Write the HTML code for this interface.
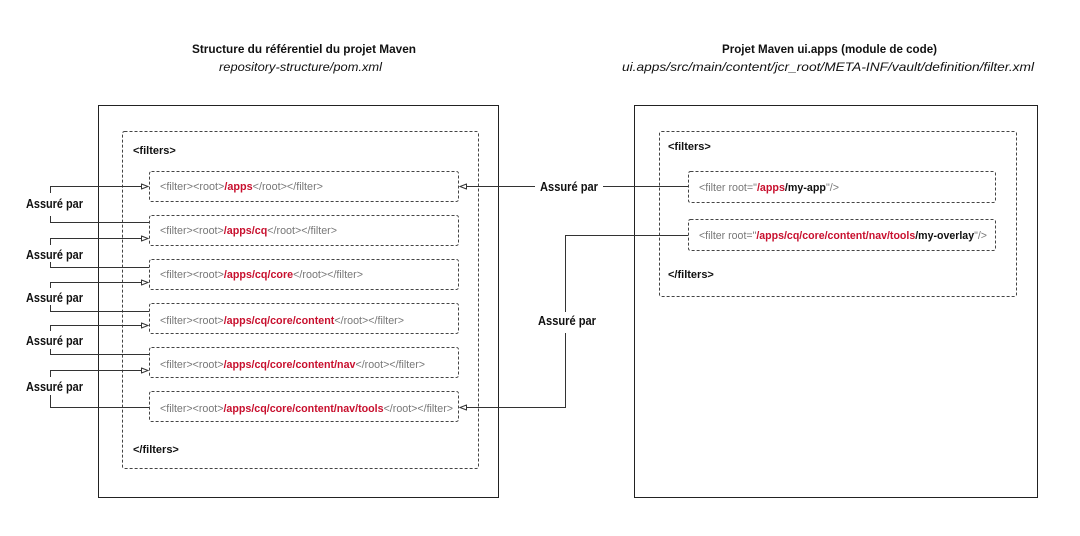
<!DOCTYPE html>
<html><head><meta charset="utf-8"><style>
html,body{margin:0;padding:0;background:#fff;width:1080px;height:536px;overflow:hidden}
svg{display:block}
text{font-family:"Liberation Sans Narrow","Liberation Sans",sans-serif}
.t{font-size:12px;font-weight:bold;fill:#111}
.ti{font-size:12px;font-style:italic;fill:#111}
.f{font-size:11px;fill:#777}
.r{fill:#c8102e;font-weight:bold}
.k{fill:#111;font-weight:bold}
.lab{font-size:12.5px;font-weight:bold;fill:#111}
.tag{font-size:11px;font-weight:bold;fill:#111}
</style></head><body>
<svg width="1080" height="536" viewBox="0 0 1080 536">
<defs>
<marker id="a" markerWidth="8" markerHeight="6" refX="7" refY="3" orient="auto" markerUnits="userSpaceOnUse">
<path d="M0.5,0.5 L7,3 L0.5,5.5 Z" fill="#fff" stroke="#333" stroke-width="1"/>
</marker>
</defs>
<text class="t" x="192" y="53" textLength="224" lengthAdjust="spacingAndGlyphs">Structure du référentiel du projet Maven</text>
<text class="ti" x="219" y="71" textLength="163" lengthAdjust="spacingAndGlyphs">repository-structure/pom.xml</text>
<text class="t" x="722" y="53" textLength="215" lengthAdjust="spacingAndGlyphs">Projet Maven ui.apps (module de code)</text>
<text class="ti" x="622" y="71" textLength="412" lengthAdjust="spacingAndGlyphs">ui.apps/src/main/content/jcr_root/META-INF/vault/definition/filter.xml</text>

<g fill="none" stroke="#222" stroke-width="1">
<rect x="98.5" y="105.5" width="400" height="392"/>
<rect x="634.5" y="105.5" width="403" height="392"/>
</g>
<g fill="none" stroke="#444" stroke-width="1" stroke-dasharray="3,2">
<rect x="122.5" y="131.5" width="356" height="337" rx="2"/>
<rect x="149.5" y="171.5" width="309" height="30" rx="2"/>
<rect x="149.5" y="215.5" width="309" height="30" rx="2"/>
<rect x="149.5" y="259.5" width="309" height="30" rx="2"/>
<rect x="149.5" y="303.5" width="309" height="30" rx="2"/>
<rect x="149.5" y="347.5" width="309" height="30" rx="2"/>
<rect x="149.5" y="391.5" width="309" height="30" rx="2"/>
<rect x="659.5" y="131.5" width="357" height="165" rx="2"/>
<rect x="688.5" y="171.5" width="307" height="31" rx="2"/>
<rect x="688.5" y="219.5" width="307" height="31" rx="2"/>
</g>

<text class="tag" x="133" y="154">&lt;filters&gt;</text>
<text class="tag" x="133" y="453">&lt;/filters&gt;</text>
<text class="tag" x="668" y="150">&lt;filters&gt;</text>
<text class="tag" x="668" y="278">&lt;/filters&gt;</text>

<text class="f" x="160" y="190" textLength="163" lengthAdjust="spacingAndGlyphs">&lt;filter&gt;&lt;root&gt;<tspan class="r">/apps</tspan>&lt;/root&gt;&lt;/filter&gt;</text>
<text class="f" x="160" y="234" textLength="177" lengthAdjust="spacingAndGlyphs">&lt;filter&gt;&lt;root&gt;<tspan class="r">/apps/cq</tspan>&lt;/root&gt;&lt;/filter&gt;</text>
<text class="f" x="160" y="278" textLength="203" lengthAdjust="spacingAndGlyphs">&lt;filter&gt;&lt;root&gt;<tspan class="r">/apps/cq/core</tspan>&lt;/root&gt;&lt;/filter&gt;</text>
<text class="f" x="160" y="324" textLength="244" lengthAdjust="spacingAndGlyphs">&lt;filter&gt;&lt;root&gt;<tspan class="r">/apps/cq/core/content</tspan>&lt;/root&gt;&lt;/filter&gt;</text>
<text class="f" x="160" y="368" textLength="265" lengthAdjust="spacingAndGlyphs">&lt;filter&gt;&lt;root&gt;<tspan class="r">/apps/cq/core/content/nav</tspan>&lt;/root&gt;&lt;/filter&gt;</text>
<text class="f" x="160" y="412" textLength="293" lengthAdjust="spacingAndGlyphs">&lt;filter&gt;&lt;root&gt;<tspan class="r">/apps/cq/core/content/nav/tools</tspan>&lt;/root&gt;&lt;/filter&gt;</text>

<text class="f" x="699" y="191" textLength="140" lengthAdjust="spacingAndGlyphs">&lt;filter root="<tspan class="r">/apps</tspan><tspan class="k">/my-app</tspan>"/&gt;</text>
<text class="f" x="699" y="239" textLength="288" lengthAdjust="spacingAndGlyphs">&lt;filter root="<tspan class="r">/apps/cq/core/content/nav/tools</tspan><tspan class="k">/my-overlay</tspan>"/&gt;</text>

<g fill="none" stroke="#333" stroke-width="1">
<path d="M50.5,193 V186.5 H148" marker-end="url(#a)"/>
<path d="M50.5,216 V222.5 H149"/>
<path d="M50.5,245 V238.5 H148" marker-end="url(#a)"/>
<path d="M50.5,262 V267.5 H149"/>
<path d="M50.5,288 V282.5 H148" marker-end="url(#a)"/>
<path d="M50.5,305 V311.5 H149"/>
<path d="M50.5,331 V325.5 H148" marker-end="url(#a)"/>
<path d="M50.5,349 V354.5 H149"/>
<path d="M50.5,377 V370.5 H148" marker-end="url(#a)"/>
<path d="M50.5,395 V407.5 H149"/>
<path d="M535,186.5 H460" marker-end="url(#a)"/>
<path d="M603,186.5 H688"/>
<path d="M688,235.5 H565.5 V312"/>
<path d="M565.5,333 V407.5 H460" marker-end="url(#a)"/>
</g>

<text class="lab" x="26" y="208" textLength="57" lengthAdjust="spacingAndGlyphs">Assuré par</text>
<text class="lab" x="26" y="259" textLength="57" lengthAdjust="spacingAndGlyphs">Assuré par</text>
<text class="lab" x="26" y="302" textLength="57" lengthAdjust="spacingAndGlyphs">Assuré par</text>
<text class="lab" x="26" y="345" textLength="57" lengthAdjust="spacingAndGlyphs">Assuré par</text>
<text class="lab" x="26" y="391" textLength="57" lengthAdjust="spacingAndGlyphs">Assuré par</text>
<text class="lab" x="540" y="191" textLength="58" lengthAdjust="spacingAndGlyphs">Assuré par</text>
<text class="lab" x="538" y="325" textLength="58" lengthAdjust="spacingAndGlyphs">Assuré par</text>
</svg>
</body></html>
